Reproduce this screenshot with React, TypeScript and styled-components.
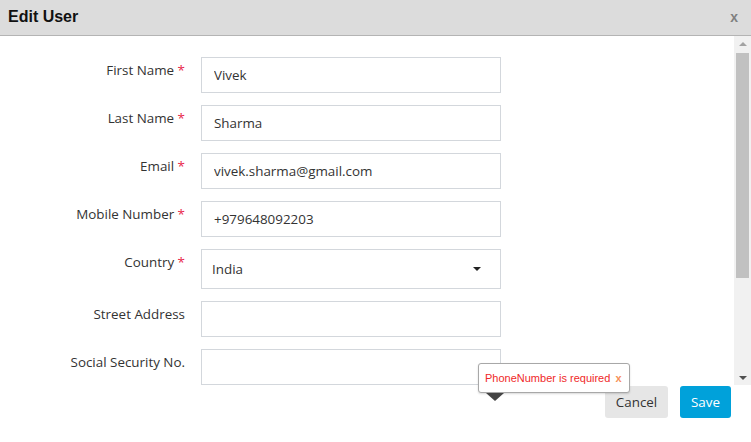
import styled, { createGlobalStyle } from "styled-components";

const GlobalStyle = createGlobalStyle`
  html, body {
    margin: 0;
    padding: 0;
    background: #fff;
  }
  * {
    box-sizing: border-box;
  }
`;

const fields = [
  { label: "First Name", value: "Vivek", required: true },
  { label: "Last Name", value: "Sharma", required: true },
  { label: "Email", value: "vivek.sharma@gmail.com", required: true },
  { label: "Mobile Number", value: "+979648092203", required: true },
  { label: "Country", value: "India", required: true, select: true },
  { label: "Street Address", value: "" },
  { label: "Social Security No.", value: "" },
];

export default function App() {
  return (
    <>
      <GlobalStyle />
      <Dialog>
        <Header>
          <Title>Edit User</Title>
          <Close>x</Close>
        </Header>
        <Body>
          <Form>
            {fields.map((f) => (
              <Row key={f.label}>
                <Label>
                  {f.label}
                  {f.required && <Star> *</Star>}
                </Label>
                {f.select ? (
                  <Select>
                    <span>{f.value}</span>
                    <Caret />
                  </Select>
                ) : (
                  <Input defaultValue={f.value} />
                )}
              </Row>
            ))}
          </Form>
          <ScrollBar>
            <ScrollArrow />
            <Thumb />
            <ScrollArrow down />
          </ScrollBar>
        </Body>
        <Footer>
          <Button>Cancel</Button>
          <Button primary>Save</Button>
        </Footer>
        <Tooltip>
          PhoneNumber is required <TipClose>x</TipClose>
        </Tooltip>
      </Dialog>
    </>
  );
}

const Dialog = styled.div`
  position: relative;
  width: 751px;
  height: 442px;
  background: #fff;
  display: flex;
  flex-direction: column;
`;

const Header = styled.div`
  height: 36px;
  flex: none;
  background: #dcdcdc;
  border-bottom: 1px solid #b4b4b4;
  display: flex;
  align-items: center;
  justify-content: space-between;
  padding: 0 13px 1px 8px;
`;

const Title = styled.h1`
  margin: 0;
  font-family: "Liberation Sans", Arial, sans-serif;
  font-size: 16px;
  font-weight: bold;
  color: #111;
`;

const Close = styled.span`
  font-family: "Liberation Sans", Arial, sans-serif;
  font-size: 14px;
  font-weight: bold;
  color: #808080;
`;

const Body = styled.div`
  height: 349px;
  flex: none;
  display: flex;
  overflow: hidden;
`;

const Form = styled.div`
  flex: 1;
  display: flex;
  flex-direction: column;
  gap: 12px;
  padding: 21px 0 0 8px;
`;

const ScrollBar = styled.div`
  width: 17px;
  flex: none;
  background: #f1f1f1;
  display: flex;
  flex-direction: column;
  align-items: center;
`;

const ScrollArrow = styled.div<{ down?: boolean }>`
  height: 17px;
  width: 100%;
  flex: none;
  display: flex;
  align-items: center;
  justify-content: center;
  margin-top: ${(p) => (p.down ? "auto" : "0")};

  &::before {
    content: "";
    border-left: 4px solid transparent;
    border-right: 4px solid transparent;
    ${(p) =>
      p.down
        ? "border-top: 4px solid #505050; margin-top: 2px;"
        : "border-bottom: 4px solid #a3a3a3; margin-top: -1px;"}
  }
`;

const Thumb = styled.div`
  width: 13px;
  height: 225px;
  flex: none;
  background: #c1c1c1;
`;

const Label = styled.label`
  text-align: right;
  padding-top: 4px;
  font-family: "Open Sans", sans-serif;
  font-size: 13.4px;
  color: #333;
`;

const Row = styled.div`
  display: grid;
  grid-template-columns: 177px 300px;
  column-gap: 16px;
  align-items: start;
`;

const Star = styled.span`
  color: #e8264a;
`;

const Input = styled.input`
  height: 36px;
  width: 300px;
  border: 1px solid #d3d7dc;
  padding: 0 12px;
  font-family: "Open Sans", sans-serif;
  font-size: 13.4px;
  color: #333;
  outline: none;
`;

const Select = styled.div`
  height: 40px;
  width: 300px;
  border: 1px solid #d3d7dc;
  padding: 0 19px 0 10px;
  display: flex;
  align-items: center;
  justify-content: space-between;
  font-family: "Open Sans", sans-serif;
  font-size: 13.4px;
  color: #333;
`;

const Caret = styled.span`
  width: 0;
  height: 0;
  border-left: 4px solid transparent;
  border-right: 4px solid transparent;
  border-top: 4px solid #222;
`;

const Footer = styled.div`
  flex: 1;
  display: flex;
  justify-content: flex-end;
  align-items: flex-start;
  gap: 12px;
  padding: 1px 20px 0 0;
`;

const Button = styled.button<{ primary?: boolean }>`
  height: 32px;
  width: ${(p) => (p.primary ? "51px" : "63px")};
  padding: 0;
  border: none;
  border-radius: 3px;
  background: ${(p) => (p.primary ? "#00a1da" : "#e6e6e6")};
  color: ${(p) => (p.primary ? "#fff" : "#333")};
  font-family: "Open Sans", sans-serif;
  font-size: 13.4px;
`;

const Tooltip = styled.div`
  position: absolute;
  left: 478px;
  top: 363px;
  width: 152px;
  height: 30px;
  background: #fff;
  border: 1px solid #a8a8a8;
  border-radius: 3px;
  box-shadow: 0 1px 2px rgba(0, 0, 0, 0.15);
  padding: 0 6px;
  display: flex;
  align-items: center;
  font-family: "Liberation Sans", Arial, sans-serif;
  font-size: 11px;
  color: #f02828;
  white-space: pre;

  &::after {
    content: "";
    position: absolute;
    left: 7px;
    bottom: -9px;
    border-left: 9px solid transparent;
    border-right: 9px solid transparent;
    border-top: 8px solid #444;
  }
`;

const TipClose = styled.span`
  margin-left: 2px;
  color: #f7905a;
  font-weight: bold;
`;
